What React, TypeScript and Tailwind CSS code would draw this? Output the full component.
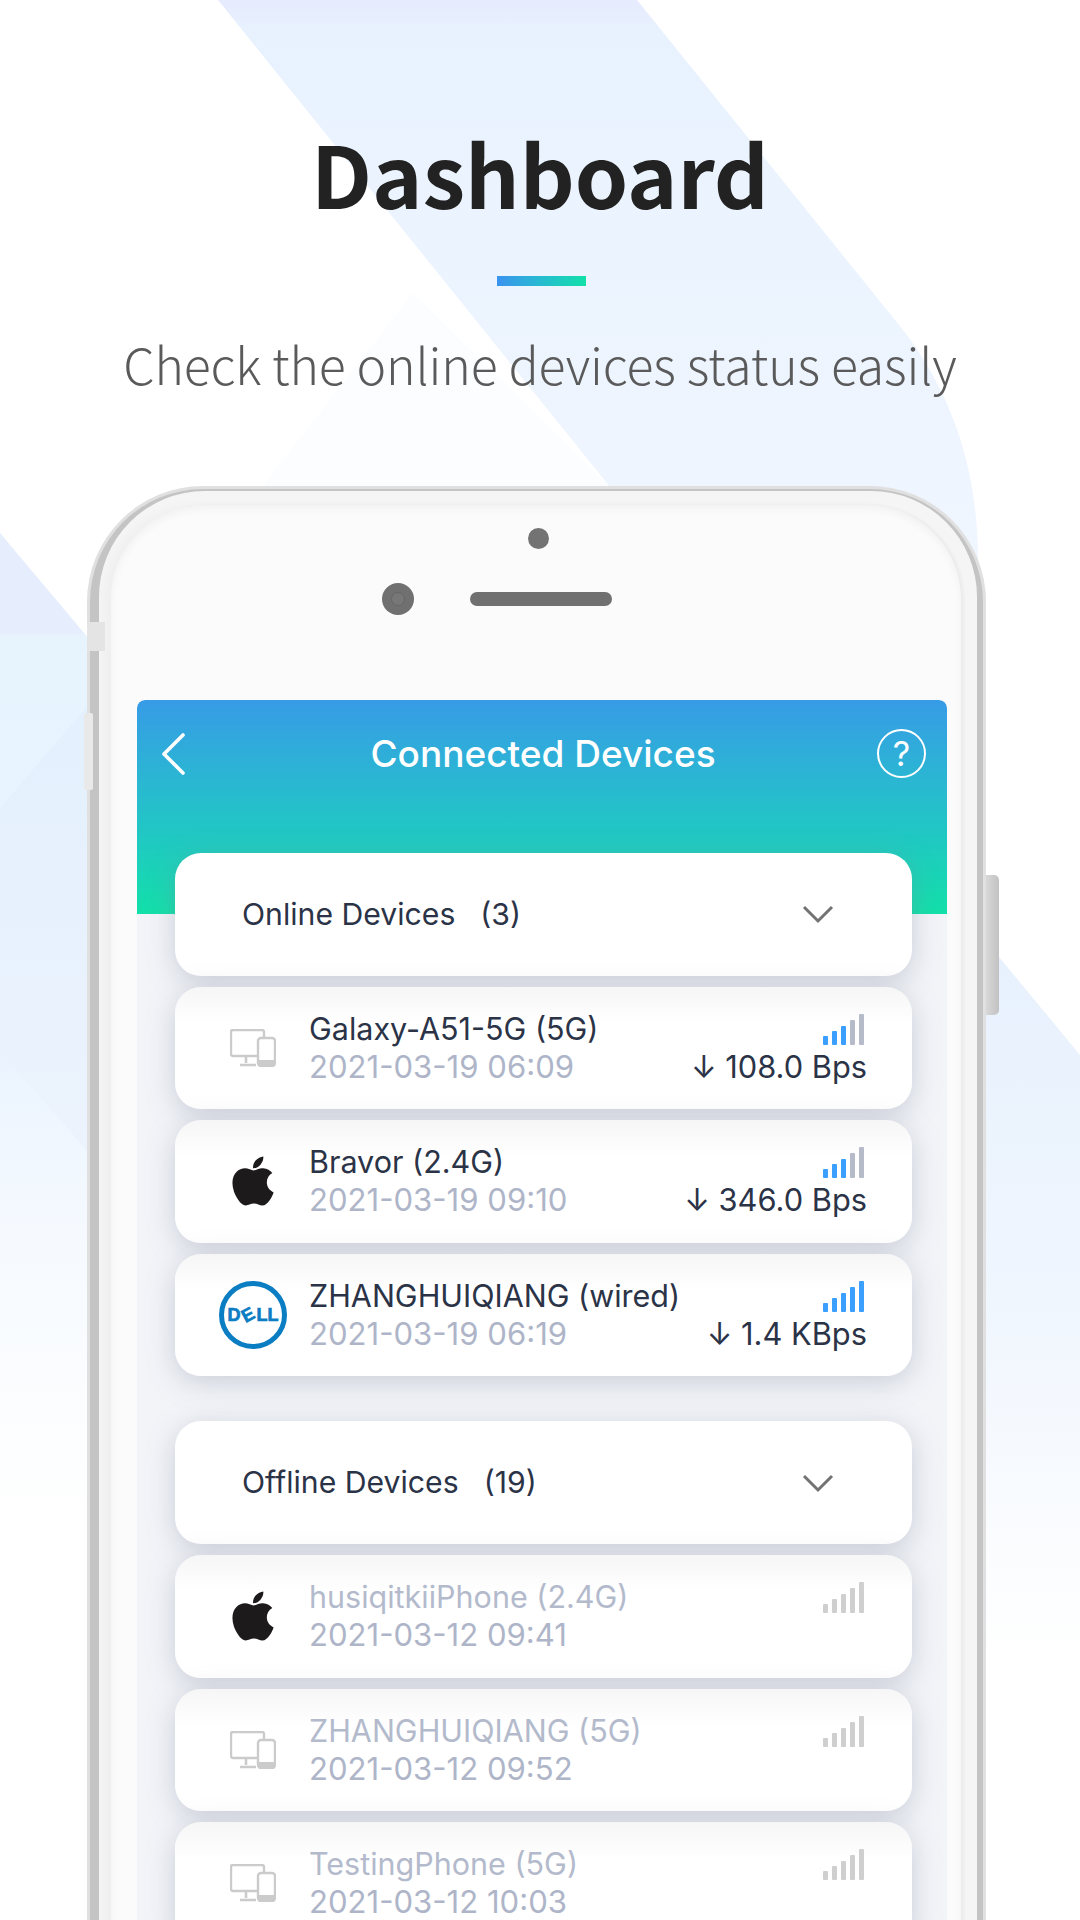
import React from 'react';
import { FaApple } from 'react-icons/fa';

type IconKind = 'device' | 'apple' | 'dell';

interface Device {
  name: string;
  time: string;
  icon: IconKind;
  speed?: string;
  bars?: number;
}

const onlineDevices: Device[] = [
  { name: 'Galaxy-A51-5G (5G)', time: '2021-03-19 06:09', icon: 'device', speed: '108.0 Bps', bars: 3 },
  { name: 'Bravor (2.4G)', time: '2021-03-19 09:10', icon: 'apple', speed: '346.0 Bps', bars: 3 },
  { name: 'ZHANGHUIQIANG (wired)', time: '2021-03-19 06:19', icon: 'dell', speed: '1.4 KBps', bars: 5 },
];

const offlineDevices: Device[] = [
  { name: 'husiqitkiiPhone (2.4G)', time: '2021-03-12 09:41', icon: 'apple' },
  { name: 'ZHANGHUIQIANG (5G)', time: '2021-03-12 09:52', icon: 'device' },
  { name: 'TestingPhone (5G)', time: '2021-03-12 10:03', icon: 'device' },
];

const BackgroundShapes = () => (
  <svg className="absolute inset-0" width="1080" height="1920" viewBox="0 0 1080 1920">
    <defs>
      <linearGradient id="band" gradientUnits="userSpaceOnUse" x1="0" y1="0" x2="0" y2="560">
        <stop offset="0" stopColor="#e6ebfd" />
        <stop offset="0.06" stopColor="#e8f2fe" />
        <stop offset="1" stopColor="#f0f6ff" />
      </linearGradient>
      <linearGradient id="left" gradientUnits="userSpaceOnUse" x1="0" y1="533" x2="0" y2="1520">
        <stop offset="0" stopColor="#e6edfd" />
        <stop offset="0.1" stopColor="#e6edfd" />
        <stop offset="0.105" stopColor="#e7f4fe" />
        <stop offset="0.5" stopColor="#e9f3fe" />
        <stop offset="0.72" stopColor="#f6faff" />
        <stop offset="1" stopColor="#ffffff" />
      </linearGradient>
      <linearGradient id="leftInner" gradientUnits="userSpaceOnUse" x1="0" y1="703" x2="0" y2="1154">
        <stop offset="0" stopColor="#e3f0fd" />
        <stop offset="1" stopColor="#ecf3fd" />
      </linearGradient>
      <linearGradient id="right" gradientUnits="userSpaceOnUse" x1="0" y1="950" x2="0" y2="1660">
        <stop offset="0" stopColor="#e7f1fd" />
        <stop offset="0.5" stopColor="#f0f6fe" />
        <stop offset="1" stopColor="#ffffff" />
      </linearGradient>
    </defs>
    <path d="M262 487 L413 293 L610 487 Z" fill="#fcfdff" />
    <path d="M218 0 L637 0 L895 320 Q978 420 978 560 L978 600 L640 600 L610 487 Z" fill="url(#band)" />
    <path d="M0 533 L90 640 L90 1520 L0 1520 Z" fill="url(#left)" />
    <path d="M0 808 L90 703 L90 1154 L0 1051 Z" fill="url(#leftInner)" />
    <path d="M980 948 L999 957 L1080 1055 L1080 1660 L980 1660 Z" fill="url(#right)" />
  </svg>
);

const DeviceIcon = () => (
  <svg width="46" height="38" viewBox="0 0 46 38" fill="none">
    <path d="M27 27H3a2 2 0 0 1-2-2V3a2 2 0 0 1 2-2h29a2 2 0 0 1 2 2v5" stroke="#cbcbcb" strokeWidth="2.4" />
    <path d="M16 27v7M10 36h16" stroke="#cbcbcb" strokeWidth="2.6" />
    <rect x="28" y="9" width="17" height="28" rx="3" stroke="#cbcbcb" strokeWidth="2.4" />
    <path d="M28 31h17v3a3 3 0 0 1-3 3H31a3 3 0 0 1-3-3z" fill="#cbcbcb" />
  </svg>
);

const DellLogo = () => (
  <div className="w-[68px] h-[68px] rounded-full border-[5px] border-[#0b7dc3] flex items-center justify-center font-['Liberation_Sans',sans-serif] font-bold text-[18px] leading-none text-[#0b7dc3] [-webkit-text-stroke:0.7px_#0b7dc3]">
    <span>D</span>
    <span className="mx-[2px] -rotate-[28deg]">E</span>
    <span>LL</span>
  </div>
);

const RowIcon = ({ kind }: { kind: IconKind }) => {
  if (kind === 'apple') return <FaApple size={56} color="#1c1a1b" />;
  if (kind === 'dell') return <DellLogo />;
  return <DeviceIcon />;
};

const SignalBars = ({ active, muted }: { active: number; muted?: boolean }) => (
  <div className="flex items-end gap-[4px] pr-[3px]">
    {[9, 14, 19, 25, 31].map((h, i) => {
      const color = muted ? '#cfcfcf' : i < active ? '#3a9fff' : '#b6bbca';
      return <div key={h} className="w-[5px] rounded-[1px]" style={{ height: h, backgroundColor: color }} />;
    })}
  </div>
);

const SectionCard = ({ title, count }: { title: string; count: string }) => (
  <div className="h-[122.6px] bg-white rounded-[26px] shadow-[0_6px_28px_rgba(125,131,155,0.34)] flex items-center pl-[67px] pr-[78px] relative">
    <span className="text-[30.2px] text-[#2b3347]">{title}</span>
    <span className="text-[30.2px] text-[#2b3347] ml-[25px]">{count}</span>
    <svg className="ml-auto" width="32" height="20" viewBox="0 0 32 20" fill="none">
      <path d="M2 3l14 14L30 3" stroke="#737373" strokeWidth="3" />
    </svg>
  </div>
);

const DeviceRow = ({ device, offline }: { device: Device; offline?: boolean }) => (
  <div className="h-[122.6px] rounded-[26px] bg-linear-to-b from-[#f6f6f7] via-white via-[30%] to-white shadow-[0_6px_28px_rgba(125,131,155,0.34)] flex items-center pl-[44px] pr-[45px] relative">
    <div className="w-[68px] flex justify-center shrink-0">
      <RowIcon kind={device.icon} />
    </div>
    <div className="ml-[22px] flex flex-col leading-[38px]">
      <span className={`text-[30.5px] ${offline ? 'text-[#b3bacc]' : 'text-[#2b3347]'}`}>{device.name}</span>
      <span className="text-[31.1px] text-[#aeb5c8]">{device.time}</span>
    </div>
    <div className="ml-auto self-start pt-[27px] flex flex-col items-end">
      <SignalBars active={device.bars ?? 0} muted={offline} />
      {device.speed && (
        <span className="mt-[3px] leading-[38px] text-[30.8px] text-[#2b3347]">↓ {device.speed}</span>
      )}
    </div>
  </div>
);

export default function App() {
  return (
    <div className="relative w-[1080px] h-[1920px] overflow-hidden bg-white font-['Inter',sans-serif]">
      <BackgroundShapes />

      <div className="relative flex flex-col items-center pt-[112px] font-['Noto_Sans_CJK_SC',sans-serif]">
        <h1 className="text-[85.5px] leading-[120px] font-bold text-[#222222]">Dashboard</h1>
        <div className="mt-[44px] ml-[2px] w-[89px] h-[10px] bg-linear-to-r from-[#3a92ee] to-[#12e0a8]" />
        <p className="mt-[40px] text-[50px] leading-[74px] font-light tracking-[-0.15px] text-[#5a5a5a]">
          Check the online devices status easily
        </p>
      </div>

      {/* Phone */}
      <div className="relative mt-[86px] ml-[87px] w-[899px]">
        {/* Side buttons */}
        <div className="absolute left-0 top-[136px] w-[18px] h-[29px] bg-[#e4e4e4] z-10" />
        <div className="absolute -left-[3px] top-[227px] w-[9px] h-[77px] bg-[#e9e9e9] rounded-[2px] z-10" />
        <div className="absolute left-[899px] top-[389px] w-[13px] h-[140px] bg-linear-to-r from-[#d8d8d8] to-[#c2c2c2] rounded-r-[5px]" />

        <div className="rounded-t-[116px] bg-[#e0e0e0] pt-[3px] px-[3px]">
          <div className="rounded-t-[113px] bg-[#c4c4c4] pt-[2px] pl-[9px] pr-[6px]">
            <div className="rounded-t-[106px] bg-[#f5f5f5] pt-[14px] pl-[12px] pr-[16px]">
              <div className="rounded-t-[94px] bg-[#fbfbfb] pt-[23px] pl-[26px] pr-[14px] h-[1500px] shadow-[inset_0_4px_8px_rgba(0,0,0,0.04),-8px_0_10px_rgba(0,0,0,0.025),3px_0_3px_rgba(0,0,0,0.04)]">
                {/* Earpiece */}
                <div className="flex flex-col h-[172px]">
                  <div className="ml-[391px] w-[21px] h-[21px] rounded-full bg-[#737373]" />
                  <div className="flex items-center ml-[245px] mt-[34px]">
                    <div className="w-[32px] h-[32px] rounded-full bg-[#707070] flex items-center justify-center">
                      <div className="w-[14px] h-[14px] rounded-full border border-[#666666] bg-[#777777]" />
                    </div>
                    <div className="ml-[56px] w-[142px] h-[14px] rounded-full bg-[#707070]" />
                  </div>
                </div>

                {/* Screen */}
                <div className="bg-[#f2f4f8] rounded-t-[8px] h-[1300px] overflow-hidden">
                  <div className="h-[214px] rounded-t-[8px] bg-linear-to-b from-[#379be6] to-[#12e0a9] flex items-start justify-between pt-[32px] pl-[23px] pr-[21px]">
                    <div className="w-[49px]">
                      <svg width="26" height="44" viewBox="0 0 26 44" fill="none">
                        <path d="M23 3L4 22l19 19" stroke="#ffffff" strokeWidth="3.6" strokeLinecap="round" strokeLinejoin="round" />
                      </svg>
                    </div>
                    <span className="text-[37px] leading-[44px] font-medium text-white">Connected Devices</span>
                    <div className="w-[49px] h-[49px] rounded-full border-[2.5px] border-white flex items-center justify-center text-white text-[34px] leading-none -mt-[3px]">
                      ?
                    </div>
                  </div>

                  <div className="-mt-[61px] pl-[38px] pr-[35px] flex flex-col">
                    <div className="flex flex-col gap-[11px]">
                      <SectionCard title="Online Devices" count="(3)" />
                      {onlineDevices.map(d => (
                        <DeviceRow key={d.name} device={d} />
                      ))}
                    </div>
                    <div className="flex flex-col gap-[11px] mt-[45px]">
                      <SectionCard title="Offline Devices" count="(19)" />
                      {offlineDevices.map(d => (
                        <DeviceRow key={d.name} device={d} offline />
                      ))}
                    </div>
                  </div>
                </div>
              </div>
            </div>
          </div>
        </div>
      </div>
    </div>
  );
}
